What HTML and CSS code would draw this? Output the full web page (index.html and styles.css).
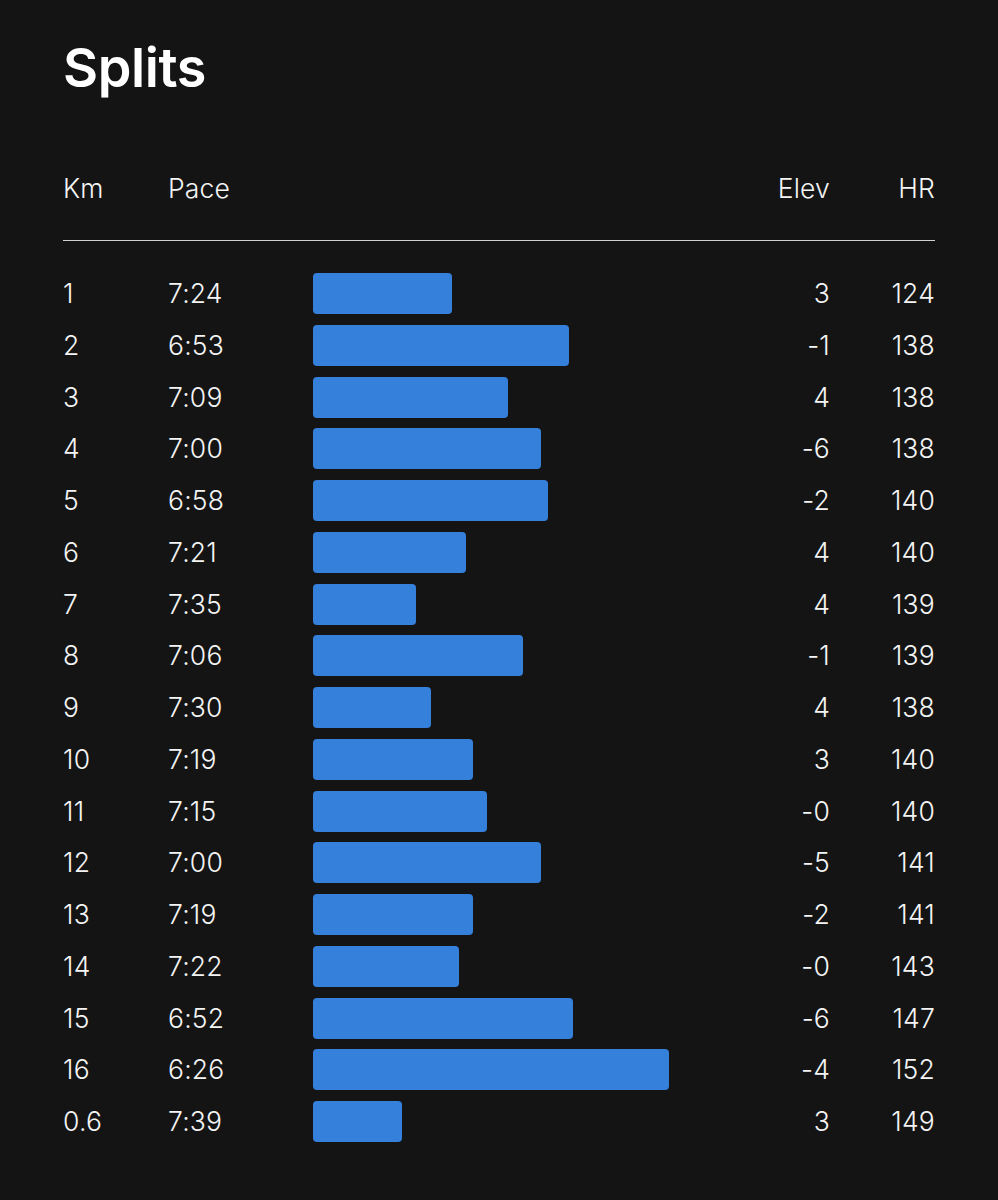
FILE: index.html
```html
<!DOCTYPE html>
<html>
<head>
<meta charset="utf-8">
<link rel="stylesheet" href="styles.css">
</head>
<body>
<main class="page">
  <h1 class="title">Splits</h1>
  <div class="table">
    <div class="row head">
      <span>Km</span><span>Pace</span><span></span><span class="r">Elev</span><span class="r">HR</span>
    </div>
    <div class="divider"></div>
    <div class="rows">
      <div class="row"><span>1</span><span>7:24</span><span class="barcell"><i class="bar" style="width:139px"></i></span><span class="r">3</span><span class="r">124</span></div>
      <div class="row"><span>2</span><span>6:53</span><span class="barcell"><i class="bar" style="width:256px"></i></span><span class="r">-1</span><span class="r">138</span></div>
      <div class="row"><span>3</span><span>7:09</span><span class="barcell"><i class="bar" style="width:195px"></i></span><span class="r">4</span><span class="r">138</span></div>
      <div class="row"><span>4</span><span>7:00</span><span class="barcell"><i class="bar" style="width:228px"></i></span><span class="r">-6</span><span class="r">138</span></div>
      <div class="row"><span>5</span><span>6:58</span><span class="barcell"><i class="bar" style="width:235px"></i></span><span class="r">-2</span><span class="r">140</span></div>
      <div class="row"><span>6</span><span>7:21</span><span class="barcell"><i class="bar" style="width:153px"></i></span><span class="r">4</span><span class="r">140</span></div>
      <div class="row"><span>7</span><span>7:35</span><span class="barcell"><i class="bar" style="width:103px"></i></span><span class="r">4</span><span class="r">139</span></div>
      <div class="row"><span>8</span><span>7:06</span><span class="barcell"><i class="bar" style="width:210px"></i></span><span class="r">-1</span><span class="r">139</span></div>
      <div class="row"><span>9</span><span>7:30</span><span class="barcell"><i class="bar" style="width:118px"></i></span><span class="r">4</span><span class="r">138</span></div>
      <div class="row"><span>10</span><span>7:19</span><span class="barcell"><i class="bar" style="width:160px"></i></span><span class="r">3</span><span class="r">140</span></div>
      <div class="row"><span>11</span><span>7:15</span><span class="barcell"><i class="bar" style="width:174px"></i></span><span class="r">-0</span><span class="r">140</span></div>
      <div class="row"><span>12</span><span>7:00</span><span class="barcell"><i class="bar" style="width:228px"></i></span><span class="r">-5</span><span class="r">141</span></div>
      <div class="row"><span>13</span><span>7:19</span><span class="barcell"><i class="bar" style="width:160px"></i></span><span class="r">-2</span><span class="r">141</span></div>
      <div class="row"><span>14</span><span>7:22</span><span class="barcell"><i class="bar" style="width:146px"></i></span><span class="r">-0</span><span class="r">143</span></div>
      <div class="row"><span>15</span><span>6:52</span><span class="barcell"><i class="bar" style="width:260px"></i></span><span class="r">-6</span><span class="r">147</span></div>
      <div class="row"><span>16</span><span>6:26</span><span class="barcell"><i class="bar" style="width:356px"></i></span><span class="r">-4</span><span class="r">152</span></div>
      <div class="row"><span>0.6</span><span>7:39</span><span class="barcell"><i class="bar" style="width:89px"></i></span><span class="r">3</span><span class="r">149</span></div>
    </div>
  </div>
</main>
</body>
</html>
```

FILE: styles.css
```css
html, body {
  margin: 0;
  padding: 0;
  background: #141414;
}
body {
  width: 998px;
  height: 1200px;
  overflow: hidden;
  font-family: Inter, "Noto Sans", sans-serif;
  color: #f4f4f4;
}
.page {
  padding: 36px 63px 0 63px;
}
.title {
  margin: 0;
  font-size: 54px;
  font-weight: 600;
  line-height: 64px;
  letter-spacing: -0.4px;
  color: #ffffff;
}
.table {
  margin-top: 62px;
  width: 872px;
}
.row {
  display: grid;
  grid-template-columns: 105px 145px 1fr 100px 105px;
  align-items: center;
  height: 41px;
  font-size: 26.5px;
  font-weight: 350;
  letter-spacing: 0.2px;
  line-height: 41px;
}
.row.head {
  height: 52px;
  line-height: 52px;
}
.r {
  text-align: right;
}
.divider {
  height: 1px;
  background: #d0d0d0;
  margin-top: 26px;
}
.rows {
  display: flex;
  flex-direction: column;
  gap: 10.75px;
  margin-top: 32px;
}
.barcell {
  display: flex;
  align-items: center;
  height: 41px;
}
.bar {
  display: block;
  height: 41px;
  background: #3580db;
  border-radius: 4px;
}
```
